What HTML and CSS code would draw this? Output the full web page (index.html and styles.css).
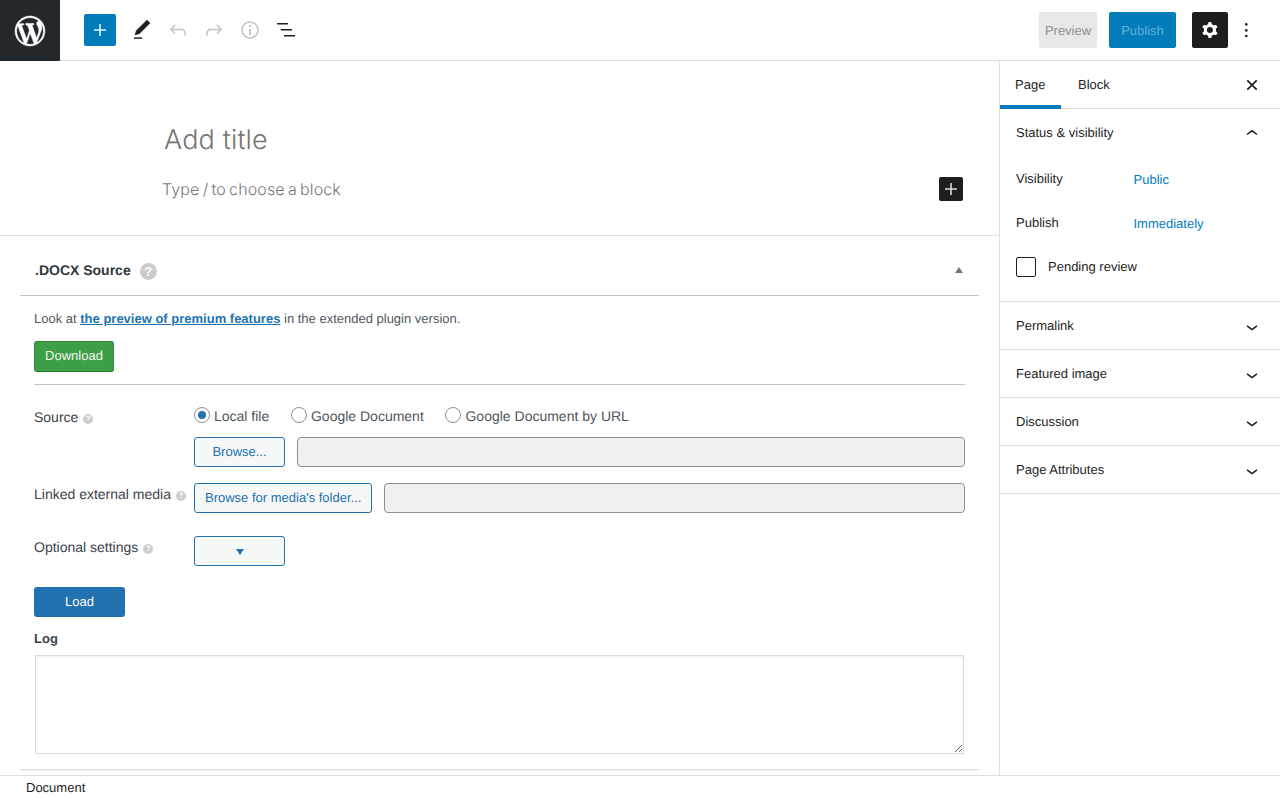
FILE: index.html
```html
<!DOCTYPE html>
<html lang="en">
<head>
    <meta charset="UTF-8">
    <meta name="viewport" content="width=device-width, initial-scale=1.0">
    <title>Add New Page</title>
    <link rel="stylesheet" href="styles.css">
</head>
<body>
    <header class="topbar">
        <a class="wp-logo" href="#">
            <svg width="36" height="36" viewBox="-2 -2 24 24" fill="#fff" stroke="#fff" stroke-width=".3"><path d="M20 10c0-5.51-4.49-10-10-10C4.48 0 0 4.49 0 10c0 5.52 4.48 10 10 10 5.51 0 10-4.48 10-10zM7.78 15.37L4.37 6.22c.55-.02 1.17-.08 1.17-.08.5-.06.44-1.13-.06-1.11 0 0-1.45.11-2.37.11-.18 0-.37 0-.58-.01C4.12 2.69 6.87 1.11 10 1.11c2.33 0 4.45.87 6.05 2.34-.68-.11-1.65.39-1.65 1.58 0 .74.45 1.36.9 2.1.35.61.55 1.36.55 2.46 0 1.49-1.4 5-1.4 5l-3.03-8.37c.54-.02.82-.17.82-.17.5-.05.44-1.25-.06-1.22 0 0-1.44.12-2.38.12-.87 0-2.33-.12-2.33-.12-.5-.03-.56 1.2-.06 1.22l.92.08 1.26 3.41zM17.41 10c.24-.64.74-1.87.43-4.25.7 1.29 1.05 2.71 1.05 4.25 0 3.29-1.73 6.24-4.4 7.78.97-2.59 1.94-5.2 2.92-7.78zM6.1 18.09C3.12 16.65 1.11 13.53 1.11 10c0-1.3.23-2.48.72-3.59C3.25 10.3 4.67 14.2 6.1 18.09zm4.03-6.63l2.58 6.98c-.86.29-1.76.45-2.71.45-.79 0-1.57-.11-2.29-.33.81-2.38 1.62-4.74 2.42-7.1z"/></svg>
        </a>
        <div class="tools">
            <button class="add-btn">
                <svg width="24" height="24" viewBox="0 0 24 24" fill="#e6f2f8"><path d="M18 11.2h-5.2V6h-1.6v5.2H6v1.6h5.2V18h1.6v-5.2H18z"/></svg>
            </button>
            <button class="tool-btn">
                <svg width="24" height="24" viewBox="0 0 24 24" fill="#1e1e1e"><path stroke="#1e1e1e" stroke-width=".4" d="M20.1 5.1L16.9 2 6.2 12.7l-1.3 4.4 4.5-1.3L20.1 5.1z"/><path d="M4 20.8h8v-1.5H4v1.5z"/></svg>
            </button>
            <button class="tool-btn">
                <svg width="24" height="24" viewBox="0 0 24 24" fill="#c4c4c4"><path d="M18.3 11.7c-.6-.6-1.4-.9-2.3-.9H6.7l2.9-3.3-1.1-1-4.5 5L8.5 16l1-1-2.7-2.7H16c.5 0 .9.2 1.3.5 1 1 1 3.4 1 4.5v.3h1.5v-.2c0-1.5 0-4.3-1.5-5.7z"/></svg>
            </button>
            <button class="tool-btn">
                <svg width="24" height="24" viewBox="0 0 24 24" fill="#c4c4c4"><path d="M15.6 6.5l-1.1 1 2.9 3.3H8c-.9 0-1.7.3-2.3.9-1.4 1.5-1.4 4.2-1.4 5.6v.2h1.5v-.3c0-1.1 0-3.5 1-4.5.3-.3.7-.5 1.3-.5h9.2L14.5 15l1.1 1.1 4.6-4.6-4.6-5z"/></svg>
            </button>
            <button class="tool-btn">
                <svg width="24" height="24" viewBox="0 0 24 24" fill="#c4c4c4"><path d="M12 3.2c-4.8 0-8.8 3.9-8.8 8.8 0 4.8 3.9 8.8 8.8 8.8 4.8 0 8.8-3.9 8.8-8.8 0-4.8-4-8.8-8.8-8.8zm0 16c-4 0-7.2-3.3-7.2-7.2C4.8 8 8 4.8 12 4.8s7.2 3.3 7.2 7.2c0 4-3.2 7.2-7.2 7.2zM11 17h2v-6h-2v6zm0-8h2V7h-2v2z"/></svg>
            </button>
            <button class="tool-btn">
                <svg width="24" height="24" viewBox="0 0 24 24" fill="#1e1e1e"><path d="M3 5h11v1.6H3zM6.7 11h11.3v1.6H6.7zM10 17h11v1.6H10z"/></svg>
            </button>
        </div>
        <div class="actions">
            <button class="preview-btn">Preview</button>
            <button class="publish-btn">Publish</button>
            <button class="settings-btn">
                <svg width="24" height="24" viewBox="0 0 24 24" fill="#fff"><path fill-rule="evenodd" d="M10.289 4.836A1 1 0 0111.275 4h1.306a1 1 0 01.987.836l.244 1.466c.787.26 1.503.679 2.108 1.218l1.393-.522a1 1 0 011.216.437l.653 1.13a1 1 0 01-.23 1.273l-1.148.944a6.025 6.025 0 010 2.435l1.149.946a1 1 0 01.23 1.272l-.653 1.13a1 1 0 01-1.216.437l-1.394-.522c-.605.54-1.32.958-2.108 1.218l-.244 1.466a1 1 0 01-.987.836h-1.306a1 1 0 01-.986-.836l-.244-1.466a5.995 5.995 0 01-2.108-1.218l-1.394.522a1 1 0 01-1.217-.436l-.653-1.131a1 1 0 01.23-1.272l1.149-.946a6.026 6.026 0 010-2.435l-1.148-.944a1 1 0 01-.23-1.272l.653-1.131a1 1 0 011.217-.437l1.393.522a5.994 5.994 0 012.108-1.218l.244-1.466zM14.929 12a3 3 0 11-6 0 3 3 0 016 0z"/></svg>
            </button>
            <button class="more-btn">
                <svg width="24" height="24" viewBox="0 0 24 24" fill="#1e1e1e"><circle cx="12.3" cy="6.4" r="1.3"/><circle cx="12.3" cy="12.4" r="1.3"/><circle cx="12.3" cy="18" r="1.3"/></svg>
            </button>
        </div>
    </header>

    <div class="layout">
        <main class="editor">
            <div class="canvas">
                <h1 class="post-title">Add title</h1>
                <div class="block-row">
                    <p class="block-hint">Type / to choose a block</p>
                    <button class="inline-add">
                        <svg width="24" height="24" viewBox="0 0 24 24" fill="#ddd"><path d="M18 11.2h-5.2V6h-1.6v5.2H6v1.6h5.2V18h1.6v-5.2H18z"/></svg>
                    </button>
                </div>
            </div>

            <section class="metabox">
                <div class="metabox-head">
                    <h2>.DOCX Source</h2>
                    <span class="help help-big">?</span>
                    <span class="caret-up"></span>
                </div>
                <div class="metabox-body">
                    <p class="promo">Look at <a href="#">the preview of premium features</a> in the extended plugin version.</p>
                    <button class="download-btn">Download</button>
                    <hr class="sep">

                    <div class="form-grid">
                        <div class="field-label field-source">Source <span class="help">?</span></div>
                        <div class="field-source-ctl">
                            <div class="radios">
                                <label><input type="radio" name="src" checked> Local file</label>
                                <label><input type="radio" name="src"> Google Document</label>
                                <label><input type="radio" name="src"> Google Document by URL</label>
                            </div>
                            <div class="file-row">
                                <button class="outline-btn browse-btn">Browse...</button>
                                <input class="path-input" type="text" disabled>
                            </div>
                        </div>

                        <div class="field-label field-media">Linked external media <span class="help">?</span></div>
                        <div class="file-row field-media-ctl">
                            <button class="outline-btn">Browse for media's folder...</button>
                            <input class="path-input" type="text" disabled>
                        </div>

                        <div class="field-label field-optional">Optional settings <span class="help">?</span></div>
                        <div class="field-optional-ctl">
                            <button class="outline-btn browse-btn"><span class="caret-down"></span></button>
                        </div>
                    </div>

                    <button class="load-btn">Load</button>
                    <div class="log-label">Log</div>
                    <textarea class="log-area"></textarea>
                </div>
            </section>
            <div class="metabox-end"></div>
        </main>

        <aside class="sidebar">
            <div class="tabs">
                <button class="tab tab-active">Page</button>
                <button class="tab">Block</button>
                <button class="close-btn">
                    <svg width="24" height="24" viewBox="0 0 24 24" fill="none" stroke="#1e1e1e" stroke-width="1.7"><path d="M7.3 7.3l9.4 9.4M16.7 7.3l-9.4 9.4"/></svg>
                </button>
            </div>

            <div class="panel panel-open">
                <div class="panel-head">
                    <span>Status &amp; visibility</span>
                    <svg width="24" height="24" viewBox="0 0 24 24" fill="none" stroke="#1e1e1e" stroke-width="1.5"><path d="M7 13.5L12 9.8l5 3.7"/></svg>
                </div>
                <div class="panel-row">
                    <span class="row-label">Visibility</span>
                    <a class="row-value" href="#">Public</a>
                </div>
                <div class="panel-row">
                    <span class="row-label">Publish</span>
                    <a class="row-value" href="#">Immediately</a>
                </div>
                <label class="pending"><span class="check-box"></span><span class="pending-text">Pending review</span></label>
            </div>

            <div class="panel">
                <div class="panel-head">
                    <span>Permalink</span>
                    <svg width="24" height="24" viewBox="0 0 24 24" fill="none" stroke="#1e1e1e" stroke-width="1.5"><path d="M7 11.8l5 3.7 5-3.7"/></svg>
                </div>
            </div>
            <div class="panel">
                <div class="panel-head">
                    <span>Featured image</span>
                    <svg width="24" height="24" viewBox="0 0 24 24" fill="none" stroke="#1e1e1e" stroke-width="1.5"><path d="M7 11.8l5 3.7 5-3.7"/></svg>
                </div>
            </div>
            <div class="panel">
                <div class="panel-head">
                    <span>Discussion</span>
                    <svg width="24" height="24" viewBox="0 0 24 24" fill="none" stroke="#1e1e1e" stroke-width="1.5"><path d="M7 11.8l5 3.7 5-3.7"/></svg>
                </div>
            </div>
            <div class="panel">
                <div class="panel-head">
                    <span>Page Attributes</span>
                    <svg width="24" height="24" viewBox="0 0 24 24" fill="none" stroke="#1e1e1e" stroke-width="1.5"><path d="M7 11.8l5 3.7 5-3.7"/></svg>
                </div>
            </div>
        </aside>
    </div>

    <footer class="statusbar">Document</footer>
</body>
</html>
```

FILE: styles.css
```css
:root {
    --wp-blue: #007cba;
    --plugin-blue: #2271b1;
    --dark: #1e1e1e;
    --line: #e0e0e0;
    --sans: 'Liberation Sans', Arial, sans-serif;
}

* {
    box-sizing: border-box;
    margin: 0;
    padding: 0;
}

html, body {
    height: 100%;
}

body {
    font-family: var(--sans);
    font-size: 13px;
    color: #1e1e1e;
    background: #fff;
    display: flex;
    flex-direction: column;
    overflow: hidden;
    text-rendering: geometricPrecision;
}

button {
    font-family: var(--sans);
    font-size: 13px;
    border: none;
    background: none;
    cursor: pointer;
    text-rendering: geometricPrecision;
}

svg {
    display: block;
}

/* top toolbar */
.topbar {
    height: 61px;
    flex: none;
    display: flex;
    align-items: center;
    border-bottom: 1px solid var(--line);
}

.wp-logo {
    width: 60px;
    height: 61px;
    margin-bottom: -1px;
    background: #23282d;
    display: flex;
    align-items: center;
    justify-content: center;
}

.tools {
    display: flex;
    align-items: center;
    margin-left: 24px;
}

.add-btn {
    width: 32px;
    height: 32px;
    margin-right: 8px;
    background: var(--wp-blue);
    border-radius: 2px;
    display: flex;
    align-items: center;
    justify-content: center;
}

.tool-btn {
    width: 36px;
    height: 36px;
    display: flex;
    align-items: center;
    justify-content: center;
}

.actions {
    margin-left: auto;
    display: flex;
    align-items: center;
    padding-right: 22px;
}

.preview-btn {
    width: 58px;
    height: 36px;
    margin-right: 12px;
    background: #e8e8e8;
    color: #8f8f8f;
    border-radius: 2px;
}

.publish-btn {
    width: 67px;
    height: 36px;
    margin-right: 16px;
    background: var(--wp-blue);
    color: #66b0d6;
    border-radius: 2px;
}

.settings-btn {
    width: 36px;
    height: 36px;
    background: var(--dark);
    border-radius: 2px;
    display: flex;
    align-items: center;
    justify-content: center;
}

.more-btn {
    width: 24px;
    height: 36px;
    margin-left: 6px;
    display: flex;
    align-items: center;
    justify-content: center;
}

.layout {
    flex: 1;
    min-height: 0;
    display: flex;
}

/* editor column */
.editor {
    flex: 1;
    min-width: 0;
    overflow: hidden;
    border-right: 1px solid var(--line);
}

.canvas {
    height: 175px;
    padding: 62px 36px 0 163px;
    border-bottom: 1px solid var(--line);
}

.post-title {
    font-family: 'Inter', sans-serif;
    font-size: 27px;
    font-weight: 300;
    line-height: 34px;
    letter-spacing: .15px;
    color: #757575;
    padding-left: 1px;
}

.block-row {
    display: flex;
    align-items: center;
    justify-content: space-between;
    margin-top: 20px;
}

.block-hint {
    font-family: 'Inter', sans-serif;
    font-size: 16px;
    font-weight: 300;
    letter-spacing: .14px;
    word-spacing: -1.5px;
    color: #777;
    margin-left: -1px;
}

.inline-add {
    width: 24px;
    height: 24px;
    background: var(--dark);
    border-radius: 2px;
}

.metabox {
    margin: 0 20px;
    color: #50575e;
}

.metabox-head {
    height: 60px;
    display: flex;
    align-items: center;
    padding: 8px 15px 0;
    border-bottom: 1px solid #c3c4c7;
}

.metabox-head h2 {
    font-size: 14px;
    font-weight: 700;
    color: #32373c;
}

.help {
    display: inline-block;
    width: 10px;
    height: 10px;
    margin-left: 1px;
    border-radius: 50%;
    background: #ccc;
    color: #fff;
    font-size: 8px;
    font-weight: 700;
    line-height: 10px;
    text-align: center;
    vertical-align: 1px;
}

.help-big {
    width: 17px;
    height: 17px;
    margin: 4px 0 0 9px;
    font-size: 13px;
    line-height: 17px;
}

.caret-up {
    width: 0;
    height: 0;
    margin-left: auto;
    margin-right: 1.5px;
    border-left: 4.5px solid transparent;
    border-right: 4.5px solid transparent;
    border-bottom: 6px solid #72777c;
}

.metabox-body {
    padding: 15px 14px 0;
}

.promo {
    line-height: 15px;
}

.promo a {
    font-weight: 700;
    color: var(--plugin-blue);
}

.download-btn {
    display: block;
    width: 80px;
    height: 31px;
    margin-top: 15px;
    background: #3d9f46;
    border: 1px solid #2f8a3c;
    border-bottom-color: #2a7a35;
    border-radius: 3px;
    color: #f4f4f4;
    padding-bottom: 3px;
}

.sep {
    border: 0;
    border-top: 1px solid #c3c4c7;
    margin-top: 12px;
}

.form-grid {
    display: grid;
    grid-template-columns: 160px 1fr;
    margin-top: 22px;
    font-size: 14px;
}

.field-label {
    color: #3c434a;
}

.field-source {
    padding-top: 2px;
}

.radios {
    display: flex;
    height: 30px;
    gap: 21.7px;
}

.radios label {
    display: flex;
    gap: 4px;
    line-height: 18px;
    align-items: flex-start;
    color: #50575e;
}

.radios input {
    appearance: none;
    width: 16px;
    height: 16px;
    border: 1px solid #8c8f94;
    border-radius: 50%;
    background: #fff;
    position: relative;
}

.radios input:checked::after {
    content: '';
    position: absolute;
    left: 3px;
    top: 3px;
    width: 8px;
    height: 8px;
    border-radius: 50%;
    background: var(--plugin-blue);
}

.file-row {
    display: flex;
    gap: 12px;
}

.outline-btn {
    height: 30px;
    padding: 0 10px 2px;
    background: #f6f7f7;
    border: 1px solid var(--plugin-blue);
    border-radius: 3px;
    color: var(--plugin-blue);
    flex: none;
}

.browse-btn {
    width: 91px;
}

.path-input {
    flex: 1;
    min-width: 0;
    height: 30px;
    background: #f0f0f0;
    border: 1px solid #8c8f94;
    border-radius: 4px;
}

.field-media {
    padding-top: 19px;
}

.field-media-ctl {
    margin-top: 16px;
}

.field-optional {
    padding-top: 26px;
}

.field-optional-ctl {
    margin-top: 23px;
}

.caret-down {
    display: inline-block;
    width: 0;
    height: 0;
    margin-top: 3px;
    border-left: 4px solid transparent;
    border-right: 4px solid transparent;
    border-top: 6px solid var(--plugin-blue);
}

.load-btn {
    display: block;
    width: 91px;
    height: 30px;
    margin-top: 21px;
    padding-bottom: 2px;
    background: var(--plugin-blue);
    border-radius: 3px;
    color: #fff;
}

.log-label {
    margin-top: 14px;
    font-weight: 700;
    line-height: 15px;
    color: #3c434a;
}

.log-area {
    display: block;
    width: 929px;
    height: 99px;
    margin: 9px 0 0 1px;
    border: 1px solid #dcdcdc;
    box-shadow: inset 0 1px 2px rgba(0,0,0,.07);
    background: #fff;
}

.metabox-end {
    margin: 15px 20px 0;
    border-top: 1px solid #dcdcdc;
    box-shadow: 0 1px 1px rgba(0,0,0,.04);
}

/* settings sidebar */
.sidebar {
    width: 280px;
    flex: none;
    overflow: hidden;
}

.tabs {
    height: 48px;
    display: flex;
    align-items: stretch;
    box-shadow: inset 0 -1px 0 var(--line);
}

.tab {
    height: 48px;
    padding: 0 15px 1px;
    color: #1e1e1e;
}

.tab-active {
    width: 61px;
    padding: 0 15px 1px;
    box-shadow: inset 0 -4px 0 var(--wp-blue);
    text-align: left;
}

.tab + .tab {
    padding: 0 0 1px 17px;
}

.close-btn {
    margin-left: auto;
    margin-right: 16px;
    display: flex;
    align-items: center;
}

.panel {
    border-bottom: 1px solid var(--line);
}

.panel-open {
    height: 193px;
}

.panel-head {
    height: 47px;
    padding: 0 16px;
    display: flex;
    align-items: center;
    justify-content: space-between;
}

.panel-row {
    height: 44px;
    padding: 0 16px;
    display: flex;
    align-items: flex-start;
}

.panel-open .panel-head + .panel-row {
    margin-top: 15px;
}

.row-label {
    width: 117.5px;
    line-height: 15px;
}

.row-value {
    color: var(--wp-blue);
    text-decoration: none;
    line-height: 15px;
    padding-top: 1px;
}

.pending {
    display: flex;
    align-items: center;
    gap: 12px;
    margin-top: -2px;
    padding: 0 16px;
}

.pending-text {
    margin-top: -2px;
}

.check-box {
    width: 20px;
    height: 20px;
    border: 1px solid #1e1e1e;
    border-radius: 2px;
}

/* bottom breadcrumb bar */
.statusbar {
    height: 25px;
    flex: none;
    border-top: 1px solid var(--line);
    padding-left: 26px;
    line-height: 24px;
}
```
